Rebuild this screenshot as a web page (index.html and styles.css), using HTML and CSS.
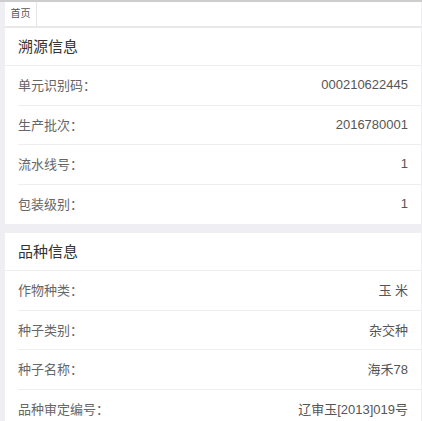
FILE: index.html
```html
<!DOCTYPE html>
<html lang="zh">
<head>
<meta charset="utf-8">
<title>溯源信息</title>
<link rel="stylesheet" href="styles.css">
</head>
<body>
<div class="page">
  <div class="tabs"><div class="tab">首页</div></div>
  <div class="content">
    <section class="card">
      <h2 class="card-title">溯源信息</h2>
      <ul class="rows">
        <li class="row"><span class="label">单元识别码<span class="colon">：</span></span><span class="value">000210622445</span></li>
        <li class="row"><span class="label">生产批次<span class="colon">：</span></span><span class="value">2016780001</span></li>
        <li class="row"><span class="label">流水线号<span class="colon">：</span></span><span class="value">1</span></li>
        <li class="row"><span class="label">包装级别<span class="colon">：</span></span><span class="value">1</span></li>
      </ul>
    </section>
    <section class="card">
      <h2 class="card-title">品种信息</h2>
      <ul class="rows">
        <li class="row"><span class="label">作物种类<span class="colon">：</span></span><span class="value">玉 米</span></li>
        <li class="row"><span class="label">种子类别<span class="colon">：</span></span><span class="value">杂交种</span></li>
        <li class="row"><span class="label">种子名称<span class="colon">：</span></span><span class="value">海禾78</span></li>
        <li class="row"><span class="label">品种审定编号<span class="colon">：</span></span><span class="value">辽审玉[2013]019号</span></li>
      </ul>
    </section>
  </div>
</div>
</body>
</html>
```
FILE: styles.css
```css
* { box-sizing: border-box; }
html, body { margin: 0; padding: 0; }
body {
  background: #efeff3;
  font-family: "Liberation Sans", "Noto Sans CJK SC", sans-serif;
  color: #555;
}
.page {
  border-top: 2px solid #cdcdcd;
  padding-left: 5px;
  padding-right: 1px;
  min-height: 421px;
}
.tabs {
  background: #fff;
  height: 26px;
  border-bottom: 2px solid #e8e8e8;
  display: flex;
}
.tab {
  width: 32px;
  height: 24px;
  border-right: 1px solid #e6e6e6;
  font-size: 10px;
  line-height: 24px;
  text-align: center;
  color: #555;
}
.content {
  display: flex;
  flex-direction: column;
  gap: 9px;
}
.card { background: #fff; }
.card-title {
  margin: 0;
  height: 38px;
  line-height: 38px;
  padding-left: 13px;
  font-size: 15px;
  font-weight: normal;
  color: #333;
  border-bottom: 1px solid #eee;
}
.rows { list-style: none; margin: 0; padding: 0 0 0 13px; }
.row {
  height: 39.5px;
  display: flex;
  justify-content: space-between;
  align-items: center;
  padding-right: 13px;
  padding-bottom: 1px;
  border-bottom: 1px solid #eee;
  font-size: 13px;
}
.row:last-child { border-bottom: none; }
.label { color: #666; }
.colon { font-family: "Noto Sans CJK TC", sans-serif; }
.value { color: #555; }
```
